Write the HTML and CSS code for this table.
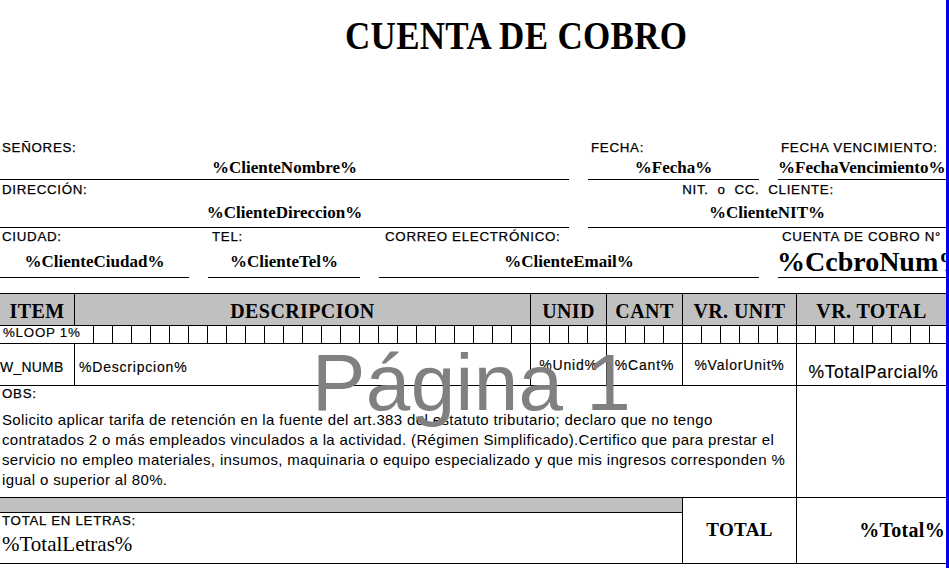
FILE: index.html
```html
<!DOCTYPE html>
<html lang="es">
<head>
<meta charset="utf-8">
<title>Cuenta de cobro</title>
<link rel="stylesheet" href="styles.css">
</head>
<body>
<div class="sheet">
  <div class="page">
    <h1 class="title"><span class="title-text">CUENTA DE COBRO</span></h1>

    <div class="fields">
      <div class="field r1 c-senores"><span class="lbl">SEÑORES:</span><span class="val">%ClienteNombre%</span></div>
      <div class="field r1 c-fecha"><span class="lbl pl3">FECHA:</span><span class="val">%Fecha%</span></div>
      <div class="field r1 c-venc"><span class="lbl pl3">FECHA VENCIMIENTO:</span><span class="val left">%FechaVencimiento%</span></div>

      <div class="field r2 c-dir"><span class="lbl">DIRECCIÓN:</span><span class="val">%ClienteDireccion%</span></div>
      <div class="field r2 c-nit"><span class="lbl center">NIT.&nbsp; o&nbsp; CC.&nbsp; CLIENTE:</span><span class="val">%ClienteNIT%</span></div>

      <div class="field r3 c-ciudad"><span class="lbl">CIUDAD:</span><span class="val">%ClienteCiudad%</span></div>
      <div class="field r3 c-tel"><span class="lbl pl4">TEL:</span><span class="val">%ClienteTel%</span></div>
      <div class="field r3 c-mail"><span class="lbl pl6">CORREO ELECTRÓNICO:</span><span class="val">%ClienteEmail%</span></div>
      <div class="field r3 c-num"><span class="lbl pl4">CUENTA DE COBRO N°</span><span class="val big left">%CcbroNum%</span></div>
    </div>

    <div class="tbl">
      <div class="th col-item">ITEM</div>
      <div class="th col-desc">DESCRIPCION</div>
      <div class="th col-unid">UNID</div>
      <div class="th col-cant">CANT</div>
      <div class="th col-vunit">VR. UNIT</div>
      <div class="th col-vtotal">VR. TOTAL</div>

      <div class="loop-label">%LOOP 1%</div>
      <div class="loop-grid"></div>

      <div class="td col-item rnum">W_NUMB</div>
      <div class="td col-desc tleft">%Descripcion%</div>
      <div class="td col-unid">%Unid%</div>
      <div class="td col-cant">%Cant%</div>
      <div class="td col-vunit">%ValorUnit%</div>
      <div class="td col-vtotal tparcial">%TotalParcial%</div>

      <div class="obs">
        <div class="lbl">OBS:</div>
        <p class="obs-text">Solicito aplicar tarifa de retención en la fuente del art.383 del estatuto tributario; declaro que no tengo<br>contratados 2 o más empleados vinculados a la actividad. (Régimen Simplificado).Certifico que para prestar el<br>servicio no empleo materiales, insumos, maquinaria o equipo especializado y que mis ingresos corresponden %<br>igual o superior al 80%.</p>
      </div>
      <div class="obs-side"></div>

      <div class="band"></div>
      <div class="letras">
        <div class="lbl">TOTAL EN LETRAS:</div>
        <div class="letras-val">%TotalLetras%</div>
      </div>
      <div class="total-lbl">TOTAL</div>
      <div class="total-val">%Total%</div>
    </div>

    <div class="watermark">Página 1</div>
  </div>
  <div class="pagebreak"></div>
</div>
</body>
</html>
```

FILE: styles.css
```css
* { box-sizing: border-box; }

html, body {
  margin: 0;
  padding: 0;
  background: #fff;
  color: #000;
}

.sheet {
  display: flex;
  height: 568px;
  overflow: hidden;
}

.page {
  --cols: 75px repeat(45, 19px) 16px;
  position: relative;
  width: 946px;
  flex: 0 0 946px;
  overflow: hidden;
}

.pagebreak {
  width: 3px;
  flex: 0 0 3px;
  background: #0000f0;
}

/* Title */
.title {
  margin: 0;
  height: 138px;
  padding: 18px 0 0 345px;
  font: bold 35px/40px "Liberation Serif", "Times New Roman", serif;
  letter-spacing: 0.3px;
  white-space: nowrap;
}
.title-text {
  display: inline-block;
  transform: scaleY(1.17);
  transform-origin: 0 32px;
}

/* Field block */
.fields {
  display: grid;
  grid-template-columns: var(--cols);
  grid-template-rows: 42px 48px 50px;
}

.field {
  display: flex;
  flex-direction: column;
  border-bottom: 1px solid #000;
  min-width: 0;
}

.lbl {
  display: block;
  font: 13.33px/15px "Liberation Sans", Arial, sans-serif;
  letter-spacing: 0.7px;
  -webkit-text-stroke: 0.25px #000;
  white-space: nowrap;
  padding-left: 2px;
}
.lbl.pl3 { padding-left: 3px; }
.lbl.pl4 { padding-left: 4px; }
.lbl.pl6 { padding-left: 6px; }
.lbl.center { text-align: center; padding-left: 0; padding-right: 18px; }

.val {
  display: block;
  font: bold 17px/20px "Liberation Serif", "Times New Roman", serif;
  text-align: center;
  white-space: nowrap;
}
.val.left { text-align: left; }
.val.big { font-size: 28px; line-height: 30px; }

.r1 { grid-row: 1; }
.r2 { grid-row: 2; }
.r3 { grid-row: 3; }
.r1 .lbl { padding-top: 2px; }
.r1 .val { margin-top: 3px; }
.r2 .lbl { padding-top: 2px; }
.r2 .val { margin-top: 6px; }
.r3 .lbl { padding-top: 1px; }
.r3 .val { margin-top: 8px; }
.r3 .val.big { margin-top: 3px; margin-left: -1px; }

.c-senores { grid-column: 1 / 28; }
.c-fecha   { grid-column: 29 / 38; }
.c-venc    { grid-column: 39 / 48; }
.c-dir     { grid-column: 1 / 28; }
.c-nit     { grid-column: 29 / 48; }
.c-ciudad  { grid-column: 1 / 8; }
.c-tel     { grid-column: 9 / 17; }
.c-mail    { grid-column: 18 / 38; }
.c-num     { grid-column: 39 / 48; }

/* Table */
.tbl {
  margin-top: 15px;
  display: grid;
  grid-template-columns: var(--cols);
  grid-template-rows: 32px 18px 42px 112px 15px 51px;
  border-top: 1px solid #000;
}

.th, .td {
  border-right: 1px solid #000;
  border-bottom: 1px solid #000;
  text-align: center;
  white-space: nowrap;
  overflow: hidden;
}

.th {
  grid-row: 1;
  background: #c0c0c0;
  font: bold 20px/22px "Liberation Serif", "Times New Roman", serif;
  letter-spacing: 0.4px;
  padding-top: 6px;
}

.td {
  grid-row: 3;
  font: 14px/16px "Liberation Sans", Arial, sans-serif;
  letter-spacing: 0.8px;
  -webkit-text-stroke: 0.15px #000;
  padding-top: 13px;
}
.td.tleft { text-align: left; padding-left: 4px; padding-top: 15px; }
.td.rnum { text-align: left; padding-top: 15px; letter-spacing: 0.2px; }
.td.tparcial { font-size: 17.5px; line-height: 20px; letter-spacing: 0.6px; padding-top: 18px; padding-left: 4px; }

.col-item   { grid-column: 1 / 2; }
.col-desc   { grid-column: 2 / 26; }
.col-unid   { grid-column: 26 / 30; }
.col-cant   { grid-column: 30 / 34; }
.col-vunit  { grid-column: 34 / 40; }
.col-vtotal { grid-column: 40 / 48; border-right: 0; }

.loop-label {
  grid-row: 2;
  grid-column: 1 / 3;
  border-right: 1px solid #000;
  border-bottom: 1px solid #000;
  font: 13.33px/13px "Liberation Sans", Arial, sans-serif;
  letter-spacing: 0.75px;
  -webkit-text-stroke: 0.15px #000;
  padding-left: 3px;
  white-space: nowrap;
}

.loop-grid {
  grid-row: 2;
  grid-column: 3 / 48;
  border-bottom: 1px solid #000;
  background: repeating-linear-gradient(to right, transparent 0 18px, #000 18px 19px);
}

.obs {
  grid-row: 4;
  grid-column: 1 / 40;
  border-right: 1px solid #000;
  border-bottom: 1px solid #000;
}

.obs-text {
  margin: 9px 0 0;
  padding-left: 2px;
  font: 15px/20px "Liberation Sans", Arial, sans-serif;
  letter-spacing: 0.36px;
  white-space: nowrap;
}

.obs-side {
  grid-row: 4;
  grid-column: 40 / 48;
  border-bottom: 1px solid #000;
}

.band {
  grid-row: 5;
  grid-column: 1 / 34;
  background: #c0c0c0;
  border-right: 1px solid #000;
  border-bottom: 1px solid #000;
}

.letras {
  grid-row: 6;
  grid-column: 1 / 34;
  border-right: 1px solid #000;
  border-bottom: 1px solid #000;
}

.letras-val {
  margin-top: 4px;
  padding-left: 2px;
  font: 21px/24px "Liberation Serif", "Times New Roman", serif;
  white-space: nowrap;
}

.total-lbl, .total-val {
  grid-row: 5 / 7;
  border-bottom: 1px solid #000;
  font: bold 20px/22px "Liberation Serif", "Times New Roman", serif;
  padding-top: 21px;
  white-space: nowrap;
}
.total-lbl {
  grid-column: 34 / 40;
  border-right: 1px solid #000;
  text-align: center;
  font-size: 19px;
  letter-spacing: 0.3px;
}
.total-val {
  grid-column: 40 / 48;
  text-align: right;
  padding-right: 1px;
  letter-spacing: 0.3px;
}

/* Watermark overlay */
.watermark {
  position: absolute;
  left: 312px;
  top: 343px;
  font: 80px/80px "Liberation Sans", Arial, sans-serif;
  letter-spacing: 0.4px;
  color: #808080;
  white-space: nowrap;
  pointer-events: none;
}
```
